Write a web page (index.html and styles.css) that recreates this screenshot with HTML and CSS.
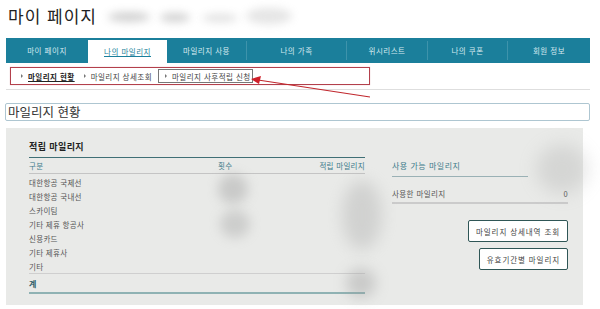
FILE: index.html
```html
<!DOCTYPE html>
<html lang="ko">
<head>
  <meta charset="UTF-8">
  <title>마이 페이지</title>
  <link rel="stylesheet" href="styles.css">
</head>
<body>

<div class="page">
  <div class="title-row">
    <h1>마이 페이지</h1>
    <span class="smudge s1"></span>
    <span class="smudge s2"></span>
    <span class="smudge s3"></span>
    <span class="smudge s4"></span>
  </div>

  <ul class="tabs">
    <li style="width:82px">마이 페이지</li>
    <li class="active" style="width:79px"><span>나의 마일리지</span></li>
    <li style="width:79px">마일리지 사용</li>
    <li class="sep" style="width:100px">나의 가족</li>
    <li class="sep" style="width:81px">위시리스트</li>
    <li class="sep" style="width:80px">나의 쿠폰</li>
    <li class="sep" style="width:83px">회원 정보</li>
  </ul>

  <div class="subnav">
    <div class="mark-box">
      <a class="sub current">마일리지 현황</a>
      <a class="sub">마일리지 상세조회</a>
      <a class="sub boxed">마일리지 사후적립 신청</a>
    </div>
  </div>

  <svg class="arrow" width="600" height="309" viewBox="0 0 600 309">
    <line x1="370" y1="97" x2="258" y2="80" stroke="#c0272d" stroke-width="1.2"/>
    <polygon points="251,79 261,76 259,84" fill="#d0202a"/>
  </svg>

  <h2 class="section-title">마일리지 현황</h2>

  <div class="panel">
    <div class="earned">
      <h3>적립 마일리지</h3>
      <div class="row head">
        <span class="c-name">구분</span>
        <span class="c-count">횟수</span>
        <span class="c-amt">적립 마일리지</span>
      </div>
      <div class="rows">
        <div class="row">대한항공 국제선</div>
        <div class="row">대한항공 국내선</div>
        <div class="row">스카이팀</div>
        <div class="row">기타 제휴 항공사</div>
        <div class="row">신용카드</div>
        <div class="row">기타 제휴사</div>
        <div class="row">기타</div>
      </div>
      <div class="row total">계</div>
    </div>

    <div class="usable">
      <div class="avail">사용 가능 마일리지</div>
      <div class="used"><span>사용한 마일리지</span><span>0</span></div>
      <div class="buttons">
        <button>마일리지 상세내역 조회</button>
        <button>유효기간별 마일리지</button>
      </div>
    </div>

    <span class="smudge b1"></span>
    <span class="smudge b2"></span>
    <span class="smudge b3"></span>
    <span class="smudge b4"></span>
    <span class="smudge b5"></span>
  </div>
</div>

</body>
</html>
```

FILE: styles.css
```css
body {
  margin: 0;
  background: #ffffff;
  font-family: "Noto Sans CJK KR", "Noto Sans", sans-serif;
  color: #555;
}
.page {
  position: relative;
  width: 600px;
  height: 309px;
  overflow: hidden;
}
.title-row {
  position: relative;
  height: 38px;
}
h1 {
  margin: 0;
  padding: 4px 0 0 8px;
  font-size: 17px;
  font-weight: 400;
  letter-spacing: 1px;
  line-height: 24px;
  color: #222;
}
.smudge {
  position: absolute;
  background: #9a9a9a;
  border-radius: 50%;
  filter: blur(4px);
  opacity: 0.45;
}
.s1 { left: 108px; top: 12px; width: 42px; height: 10px; }
.s2 { left: 160px; top: 13px; width: 30px; height: 9px; }
.s3 { left: 202px; top: 14px; width: 36px; height: 8px; opacity: 0.3; }
.s4 { left: 246px; top: 8px; width: 46px; height: 16px; opacity: 0.25; }

.tabs {
  display: flex;
  margin: 0 0 0 6px;
  padding: 0;
  list-style: none;
  height: 25px;
  width: 584px;
  background: #1b7f9b;
}
.tabs li {
  display: flex;
  align-items: center;
  justify-content: center;
  font-size: 7.5px;
  letter-spacing: 0.5px;
  color: #d6eaf0;
  box-sizing: border-box;
}
.tabs li.sep {
  border-left: 1px solid #3e93ab;
  margin: 3px 0;
}
.tabs li.active {
  background: #fff;
  margin-top: 2px;
  color: #1b7f9b;
}
.tabs li.active span {
  text-decoration: underline;
}

.subnav {
  margin-left: 6px;
  width: 584px;
  height: 27px;
  box-sizing: border-box;
  padding: 4px 0 0 4px;
  border-bottom: 1px solid #dedede;
}
.mark-box {
  display: flex;
  align-items: center;
  width: 360px;
  height: 18px;
  box-sizing: border-box;
  border: 1px solid #b3404c;
  padding-left: 10px;
  gap: 9px;
  box-shadow: 0 0 1px rgba(179, 64, 76, 0.4);
}
.sub {
  display: flex;
  align-items: center;
  font-size: 7.5px;
  letter-spacing: 0.45px;
  color: #444;
}
.sub::before {
  content: "";
  display: inline-block;
  border-left: 2px solid #777;
  border-top: 2px solid transparent;
  border-bottom: 2px solid transparent;
  margin-right: 5px;
}
.sub.current {
  font-weight: 700;
  color: #222;
  text-decoration: underline;
}
.sub.boxed {
  border: 1px solid #777;
  height: 14px;
  box-sizing: border-box;
  padding: 0 1px 0 6px;
  margin-left: -3px;
}
.arrow {
  position: absolute;
  left: 0;
  top: 0;
  pointer-events: none;
}

.section-title {
  margin: 13px 10px 0 5px;
  height: 18px;
  box-sizing: border-box;
  border: 1px solid #aec6d1;
  border-radius: 2px;
  padding-left: 2px;
  font-size: 12.5px;
  font-weight: 400;
  line-height: 15px;
  color: #333;
}

.panel {
  position: relative;
  display: flex;
  gap: 27px;
  margin: 7px 0 0 6px;
  width: 577px;
  height: 177px;
  box-sizing: border-box;
  padding: 11px 0 0 23px;
  background: #e9eae8;
}
.earned {
  width: 336px;
}
h3 {
  margin: 0;
  height: 18px;
  font-size: 9px;
  font-weight: 700;
  letter-spacing: 0.4px;
  line-height: 16px;
  color: #222;
  border-bottom: 1px solid #3f6f75;
}
.row {
  display: flex;
  align-items: center;
  height: 14px;
  font-size: 7.5px;
  letter-spacing: 0.3px;
  color: #555;
}
.row.head {
  height: 15px;
  color: #3d7b8a;
  border-bottom: 1px solid #c4c4c4;
}
.c-name { width: 189px; }
.c-count { width: 60px; }
.c-amt { flex: 1; text-align: right; }
.rows {
  padding-top: 1px;
  border-bottom: 1px solid #cfcfcf;
}
.row.total {
  height: 18px;
  font-weight: 700;
  font-size: 8px;
  color: #2f5f6a;
  border-bottom: 2px solid #8fb2b3;
}

.usable {
  width: 176px;
  padding-top: 19px;
}
.avail {
  width: 136px;
  height: 18px;
  font-size: 8px;
  color: #3d7b8a;
  letter-spacing: 0.5px;
  border-bottom: 1px solid #9ab1b5;
  line-height: 16px;
}
.used {
  display: flex;
  justify-content: space-between;
  margin-top: 10px;
  height: 15px;
  font-size: 7.5px;
  letter-spacing: 0.4px;
  color: #555;
  border-bottom: 2px solid #cbcbcb;
  line-height: 14px;
}
.buttons {
  display: flex;
  flex-direction: column;
  align-items: flex-end;
  gap: 6px;
  margin-top: 16px;
}
button {
  font-family: inherit;
  font-size: 7.5px;
  color: #444;
  background: #ffffff;
  border: 1px solid #2f5656;
  border-radius: 2px;
  height: 22px;
  padding: 0 7px;
  letter-spacing: 0.9px;
}
.b1 { left: 212px; top: 46px; width: 30px; height: 30px; filter: blur(6px); opacity: 0.4; }
.b2 { left: 214px; top: 82px; width: 30px; height: 28px; filter: blur(6px); opacity: 0.35; }
.b3 { left: 336px; top: 52px; width: 40px; height: 70px; filter: blur(8px); opacity: 0.3; }
.b4 { left: 340px; top: 140px; width: 30px; height: 30px; filter: blur(7px); opacity: 0.4; }
.b5 { left: 530px; top: 16px; width: 52px; height: 50px; filter: blur(9px); opacity: 0.25; }
```
